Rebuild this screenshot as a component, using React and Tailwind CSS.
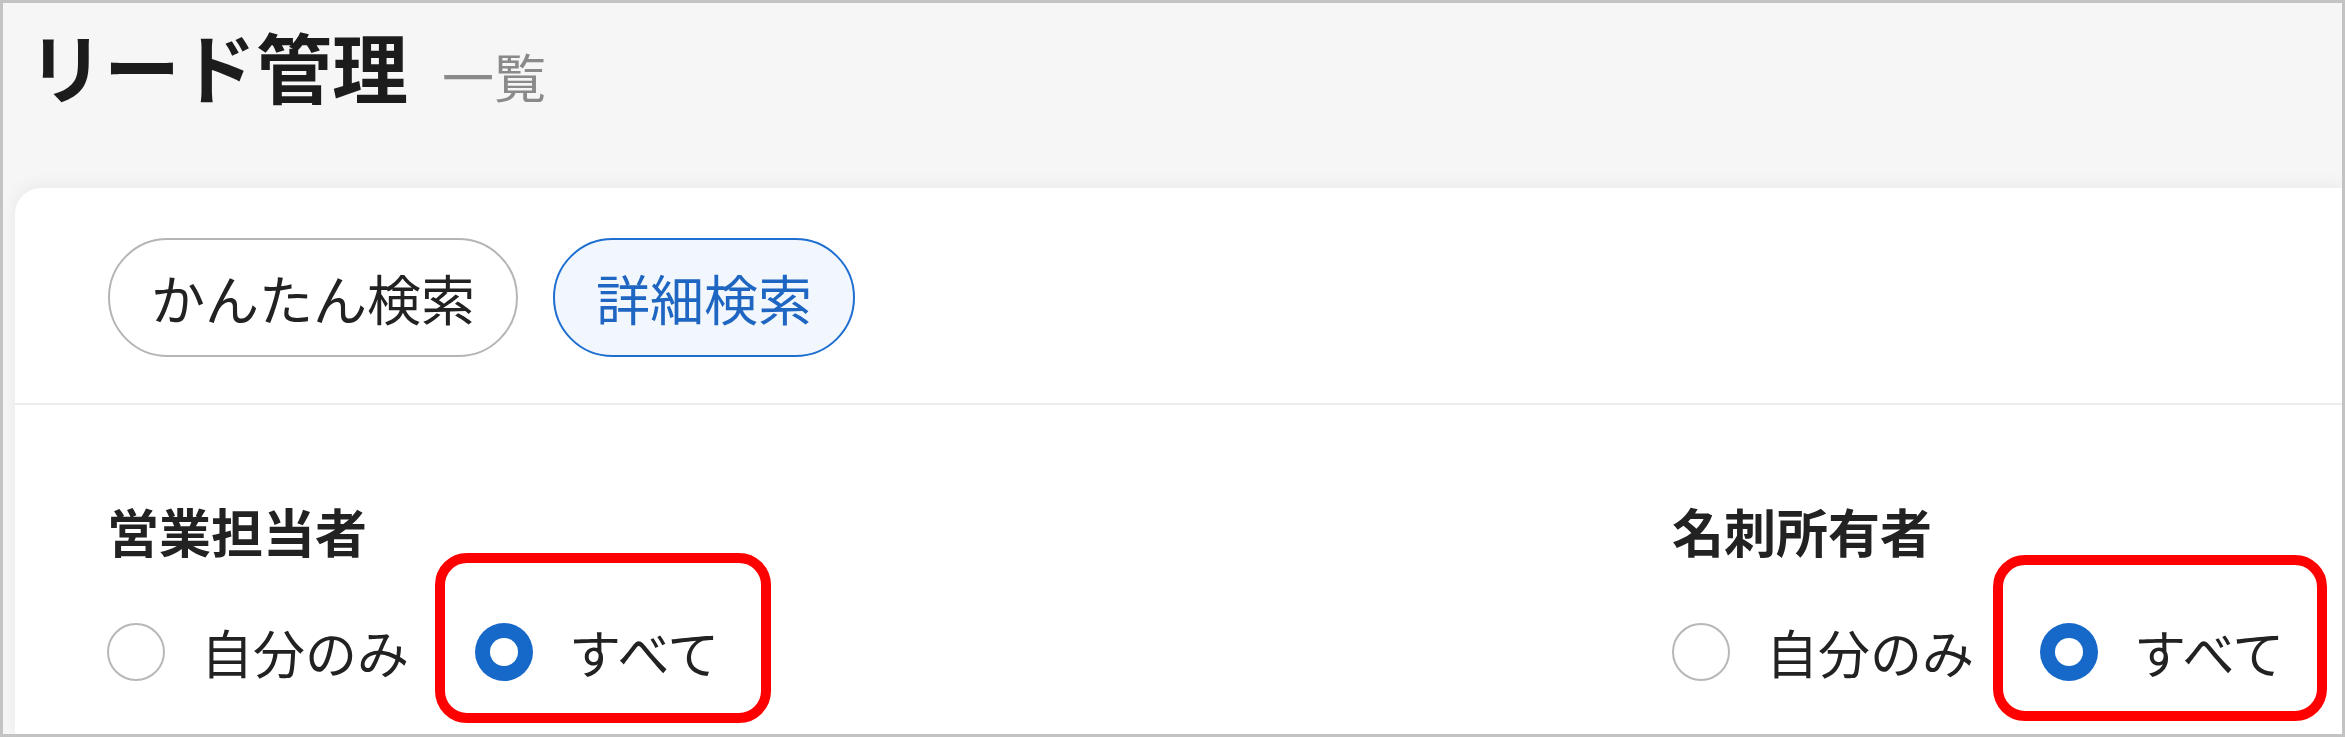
import React from "react";

const font = { fontFamily: '"Noto Sans CJK JP", "Noto Sans", sans-serif' };

function Radio({ checked, label, box }) {
  return (
    <div className="relative flex items-center gap-[36px]">
      {box && (
        <div
          className={`pointer-events-none absolute rounded-[32px] border-[10px] border-[#ff0000] ${box}`}
        />
      )}
      {checked ? (
        <span className="flex h-[58px] w-[58px] items-center justify-center rounded-full bg-[#1668c9]">
          <span className="h-[28px] w-[28px] rounded-full bg-white" />
        </span>
      ) : (
        <span className="h-[58px] w-[58px] rounded-full border-2 border-[#b8b8b8] bg-white" />
      )}
      <span className="text-[52px] leading-none text-[#222]">{label}</span>
    </div>
  );
}

function Field({ title, boxClass }) {
  return (
    <div className="flex flex-col">
      <div className="text-[52px] font-bold leading-none text-[#222]">{title}</div>
      <div className="mt-[66px] flex items-center gap-[66px]">
        <Radio label="自分のみ" />
        <Radio checked label="すべて" box={boxClass} />
      </div>
    </div>
  );
}

export default function App() {
  return (
    <div
      style={font}
      className="box-border flex h-[737px] w-[2345px] flex-col overflow-hidden border-[3px] border-[#c3c3c3] bg-[#f6f6f6]"
    >
      <div className="flex h-[185px] shrink-0 items-baseline pl-[25px] pt-[24px]">
        <span className="text-[76px] font-bold leading-none text-[#1c1c1c]">リード管理</span>
        <span className="ml-[34px] text-[52px] leading-none text-[#8a8a8a]">一覧</span>
      </div>
      <div className="ml-[12px] flex-1 rounded-tl-[26px] bg-white shadow-[0_-2px_18px_rgba(0,0,0,0.06)]">
        <div className="flex gap-[35px] pb-[46px] pl-[93px] pt-[50px]">
          <button className="box-border h-[119px] rounded-full border-2 border-[#b5b5b5] bg-white px-[41px] text-[54px] leading-none text-[#222]">
            かんたん検索
          </button>
          <button className="box-border h-[119px] rounded-full border-2 border-[#1f6fd0] bg-[#f2f7fd] px-[41px] text-[54px] leading-none text-[#1f66c2]">
            詳細検索
          </button>
        </div>
        <div className="h-[2px] bg-[#ececec]" />
        <div className="grid grid-cols-[1565px_1fr] pl-[92px] pt-[100px]">
          <Field title="営業担当者" boxClass="-left-[40px] -top-[70px] -right-[52px] -bottom-[42px]" />
          <Field title="名刺所有者" boxClass="-left-[47px] -top-[68px] -right-[43px] -bottom-[40px]" />
        </div>
      </div>
    </div>
  );
}
